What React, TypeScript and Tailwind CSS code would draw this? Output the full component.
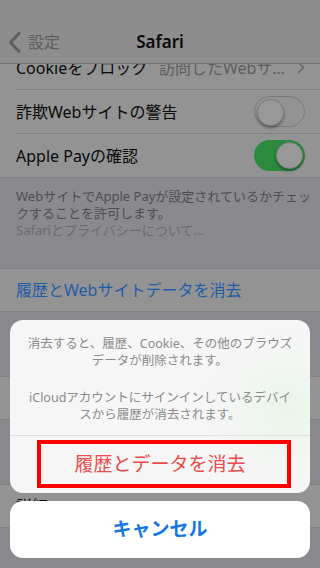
import React from 'react';

const font = { fontFamily: '"Noto Sans", "Noto Sans CJK JP", sans-serif' };

function Toggle({ on }: { on: boolean }) {
  return (
    <div
      className={`w-[51px] h-[31px] rounded-full p-[2px] flex ${
        on ? 'bg-[#2b8a3e] justify-end' : 'bg-[#939393] border border-[#7c7c7c] justify-start'
      }`}
    >
      <div className="w-[27px] h-[27px] rounded-full bg-[#989898] shadow-[0_2px_3px_rgba(0,0,0,0.35)] border border-[#808080]" />
    </div>
  );
}

function Row({ label, children, className = '' }: { label: string; children?: React.ReactNode; className?: string }) {
  return (
    <div className={`h-11 bg-[#939393] pl-4 ${className}`}>
      <div className="h-full flex items-center justify-between pr-[15px] border-b border-[#828284]">
        <span className="text-[16px] text-[#0a0a0a] whitespace-nowrap">{label}</span>
        {children}
      </div>
    </div>
  );
}

export default function App() {
  return (
    <div className="relative w-[320px] h-[568px] overflow-hidden bg-[#8a898e] flex flex-col" style={font}>
      {/* Nav bar */}
      <div className="relative z-10 h-16 shrink-0 bg-[#8d8d8e] border-b border-[#737375] pt-5">
        <div className="h-11 grid grid-cols-[1fr_auto_1fr] items-center">
          <div className="flex items-center gap-[7px] pl-[8px]">
            <svg width="13" height="21" viewBox="0 0 13 21" fill="none">
              <path d="M11 1.5 L2.5 10.5 L11 19.5" stroke="#5f5f62" strokeWidth="3" strokeLinecap="round" strokeLinejoin="round" />
            </svg>
            <span className="text-[16px] text-[#5f5f62]">設定</span>
          </div>
          <span className="text-[17px] font-semibold text-[#0a0a0a]">Safari</span>
          <div />
        </div>
      </div>

      {/* Settings content (dimmed) */}
      <div className="flex-1 overflow-hidden">
        <Row label="Cookieをブロック" className="-mt-[18px]">
          <div className="flex items-center gap-3">
            <span className="text-[16px] text-[#5e5e60] whitespace-nowrap">訪問したWebサ…</span>
            <svg width="8" height="13" viewBox="0 0 8 13" fill="none">
              <path d="M1.5 1.5 L6.5 6.5 L1.5 11.5" stroke="#6e6e70" strokeWidth="1.8" strokeLinecap="round" strokeLinejoin="round" />
            </svg>
          </div>
        </Row>
        <Row label="詐欺Webサイトの警告">
          <Toggle on={false} />
        </Row>
        <div className="h-11 bg-[#939393] pl-4 flex items-center justify-between pr-[15px] border-b border-[#828284]">
          <span className="text-[16px] text-[#0a0a0a]">Apple Payの確認</span>
          <Toggle on />
        </div>

        <div className="h-[90px] pl-4 pt-[10px] text-[13px] leading-[17px] text-[#4e4e52] whitespace-nowrap">
          <p>WebサイトでApple Payが設定されているかチェッ<br />クすることを許可します。</p>
          <p className="text-[#6a6a6e]">Safariとプライバシーについて…</p>
        </div>

        <div className="h-11 bg-[#939393] border-y border-[#828284] pl-4 flex items-center">
          <span className="text-[16px] text-[#1f5da8]">履歴とWebサイトデータを消去</span>
        </div>

        <div className="h-16" />
        <div className="h-11 bg-[#939393] border-y border-[#828284]" />
        <div className="h-16" />
        <div className="h-11 bg-[#939393] border-y border-[#828284] pl-4 flex items-center">
          <span className="text-[16px] text-[#0a0a0a]">詳細</span>
        </div>
      </div>

      {/* Action sheet */}
      <div className="absolute left-[10px] right-[10px] bottom-[10px] flex flex-col gap-2">
        <div className="rounded-[13px] overflow-hidden bg-[radial-gradient(circle_at_92%_52%,#e9f5e9_0px,#f4f6f4_55px,#f6f6f6_110px)]">
          <div className="px-2 pt-[15px] pb-[12px] text-center text-[12.5px] leading-[17px] text-[#8b8b8b] whitespace-nowrap">
            <p>消去すると、履歴、Cookie、その他のブラウズ<br />データが削除されます。</p>
            <p className="mt-5">iCloudアカウントにサインインしているデバイ<br />スから履歴が消去されます。</p>
          </div>
          <div className="relative h-[58px] border-t border-[#dedede] flex items-center justify-center">
            <span className="text-[19px] text-[#ea4c4c]">履歴とデータを消去</span>
            <div className="absolute left-[27px] right-[19px] top-[4px] bottom-[5px] border-[4px] border-[#ff0000]" />
          </div>
        </div>
        <div className="h-[57px] rounded-[13px] bg-white flex items-center justify-center">
          <span className="text-[19px] font-semibold text-[#1677e6]">キャンセル</span>
        </div>
      </div>
    </div>
  );
}
